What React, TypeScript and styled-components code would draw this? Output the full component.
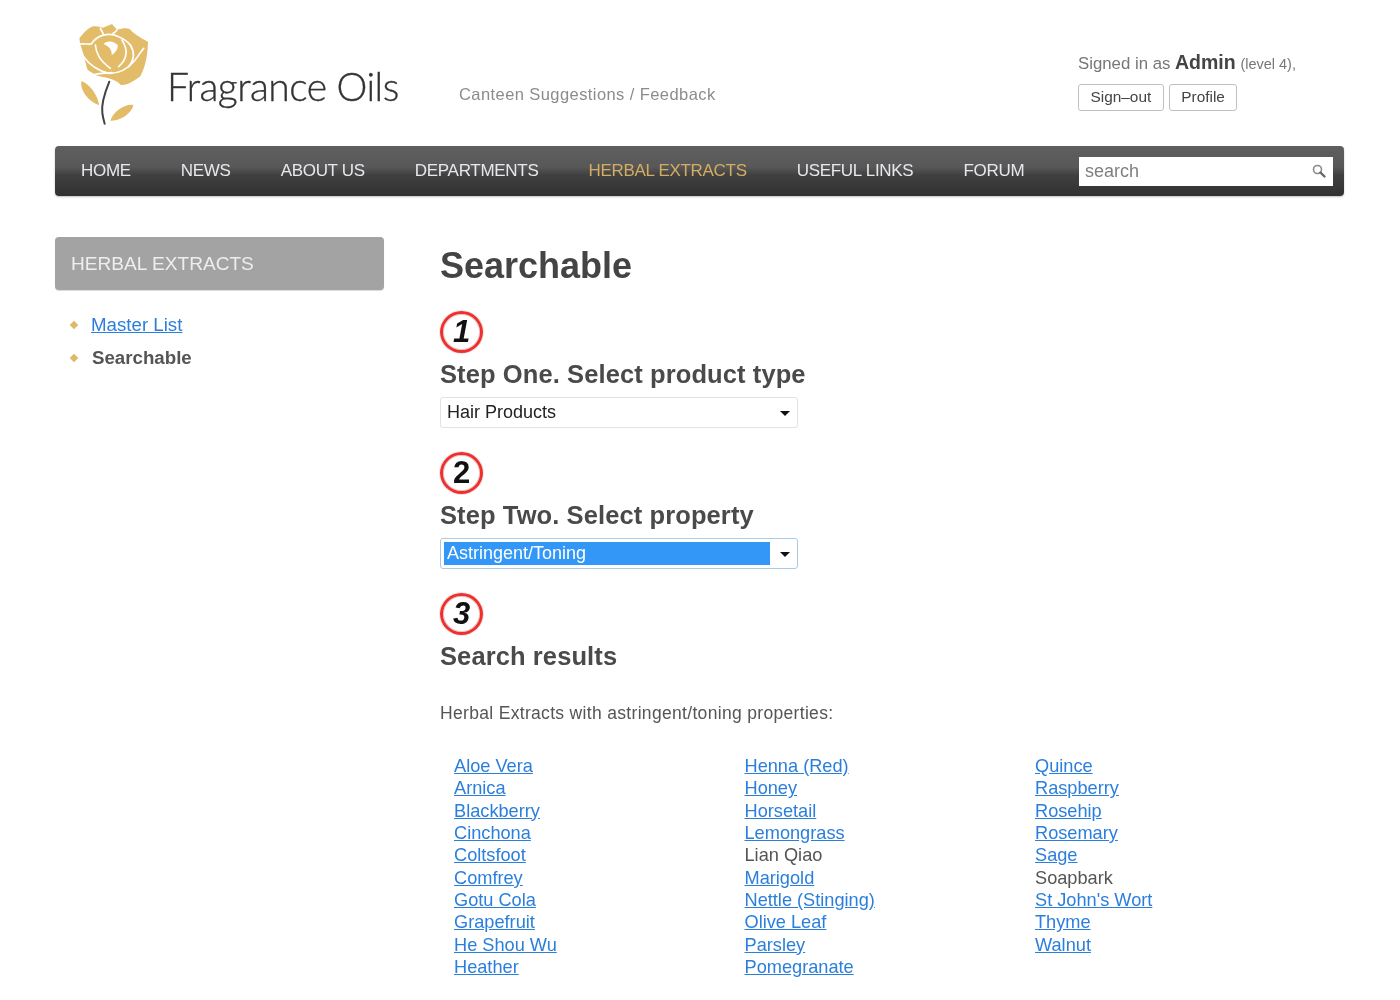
import React from 'react'
import styled, { createGlobalStyle } from 'styled-components'

const GlobalStyle = createGlobalStyle`
  html, body {
    margin: 0;
    padding: 0;
    background: #fff;
  }
  body {
    font-family: "Liberation Sans", Arial, sans-serif;
    color: #444;
  }
`

const Page = styled.div`
  width: 1400px;
  height: 1000px;
  overflow: hidden;
  box-sizing: border-box;
  padding: 0 56px 0 55px;
  filter: blur(0.35px);
`

const Header = styled.header`
  display: flex;
  height: 146px;
`

const LogoBox = styled.div`
  display: flex;
  align-items: flex-start;
  width: 404px;
  padding: 23px 0 0 22px;
  box-sizing: border-box;
`

const LogoText = styled.span`
  margin: 39px 0 0 13px;
  font-family: Lato, sans-serif;
  font-weight: 300;
  font-size: 39px;
  line-height: 48px;
  letter-spacing: -0.55px;
  color: #333;
  -webkit-text-stroke: 0.35px #333;
  white-space: nowrap;
`

const Tagline = styled.div`
  flex: 1;
  padding-top: 84px;
  font-size: 16.5px;
  line-height: 20px;
  letter-spacing: 0.42px;
  color: #8c8c8c;
`

const UserBox = styled.div`
  width: 266px;
  padding-top: 51px;
`

const SignedIn = styled.div`
  font-size: 16.8px;
  line-height: 22px;
  color: #777;
  white-space: nowrap;

  b {
    font-size: 19.5px;
    color: #444;
  }

  small {
    font-size: 14.5px;
  }
`

const UserButtons = styled.div`
  display: flex;
  gap: 5px;
  margin-top: 9px;
`

const UserButton = styled.span`
  box-sizing: border-box;
  height: 27px;
  padding: 0 11.5px;
  border: 1px solid #c0c0c0;
  border-radius: 3px;
  font-size: 15.4px;
  line-height: 24px;
  color: #444;
`

const Nav = styled.nav`
  display: flex;
  align-items: center;
  height: 50px;
  padding: 0 11px 0 26px;
  border-radius: 4px;
  background: linear-gradient(#5f5f5f, #585858 42%, #404040 58%, #313131);
  box-shadow: 0 1px 2px rgba(0, 0, 0, 0.25);
`

const NavItem = styled.span<{ $active?: boolean }>`
  margin-right: 50px;
  font-size: 17px;
  letter-spacing: -0.3px;
  color: ${(props) => (props.$active ? '#d4ad62' : '#e6e8ec')};
  white-space: nowrap;
`

const SearchBox = styled.div`
  display: flex;
  align-items: center;
  justify-content: space-between;
  box-sizing: border-box;
  width: 254px;
  height: 29px;
  margin-left: auto;
  padding: 0 7px 0 6px;
  background: #fff;
  font-size: 18px;
  color: #808080;
`

const Content = styled.div`
  display: flex;
  padding-top: 41px;
`

const Sidebar = styled.aside`
  flex: none;
  width: 329px;
  margin-right: 56px;
`

const SideTitle = styled.div`
  height: 53px;
  padding-left: 16px;
  border-radius: 4px;
  background: #a3a3a3;
  box-shadow: 0 1px 1px rgba(0, 0, 0, 0.15);
  font-size: 19.1px;
  line-height: 53px;
  color: #eee;
`

const SideList = styled.ul`
  margin: 18px 0 0;
  padding: 0 0 0 16px;
  list-style: none;
`

const SideItem = styled.li`
  display: flex;
  align-items: center;
  height: 33.5px;
  font-size: 18.7px;
`

const Diamond = styled.span`
  width: 6px;
  height: 6px;
  margin-right: 14px;
  background: #e0b766;
  transform: rotate(45deg);
`

const Current = styled.span`
  margin-left: 1px;
  font-weight: 700;
  color: #555;
`

const Link = styled.a`
  color: #2b7fdc;
  text-decoration: underline;
  cursor: pointer;
`

const Main = styled.main`
  flex: 1;
`

const Title = styled.h1`
  margin: 7px 0 23px;
  font-size: 36px;
  line-height: 44px;
  font-weight: 700;
  color: #444;
`

const Step = styled.section`
  height: 141px;
`

const Badge = styled.div<{ $upright?: boolean }>`
  display: flex;
  align-items: center;
  justify-content: center;
  box-sizing: border-box;
  width: 43px;
  height: 42px;
  border: 3px solid #f0302c;
  border-radius: 50%;
  font-size: 31px;
  font-weight: 700;
  font-style: ${(props) => (props.$upright ? 'normal' : 'italic')};
  color: #111;
  box-shadow: 0 0 0 1px rgba(90, 0, 0, 0.2) inset, 0 0 0 1px rgba(90, 0, 0, 0.1);
`

const StepTitle = styled.h2`
  margin: 0;
  padding-top: 5px;
  font-size: 25.5px;
  line-height: 32px;
  letter-spacing: 0.1px;
  font-weight: 700;
  color: #4a4a4a;
`

const Select = styled.div<{ $focused?: boolean }>`
  display: flex;
  align-items: center;
  box-sizing: border-box;
  width: 358px;
  height: 31px;
  margin-top: 7px;
  padding: 0 7px 0 3px;
  border: 1px solid ${(props) => (props.$focused ? '#a9cbe8' : '#dfe2ea')};
  border-radius: 3px;
  background: #fff;
  font-size: 18px;
  color: #222;
`

const SelectValue = styled.span<{ $selected?: boolean }>`
  flex: 1;
  height: 23px;
  margin-right: 10px;
  padding-left: 3px;
  line-height: 23px;
  color: ${(props) => (props.$selected ? '#fff' : '#222')};
  background: ${(props) => (props.$selected ? '#3397f7' : 'transparent')};
`

const Caret = styled.span`
  width: 0;
  height: 0;
  margin-top: 1px;
  border-left: 5px solid transparent;
  border-right: 5px solid transparent;
  border-top: 5px solid #111;
`

const Intro = styled.p`
  margin: -33px 0 0;
  font-size: 17.5px;
  line-height: 24px;
  letter-spacing: 0.32px;
  color: #555;
`

const Columns = styled.div`
  display: grid;
  grid-template-columns: repeat(3, 290.5px);
  margin-top: 30px;
  padding-left: 14px;
`

const Column = styled.ul`
  margin: 0;
  padding: 0;
  list-style: none;
`

const Herb = styled.li`
  height: 22.35px;
  font-size: 18.2px;
  line-height: 22.35px;
  color: #555;
`

const Rose = () => (
  <svg width="77" height="107" viewBox="0 0 231 321">
    <path
      fill="#e2bc68"
      d="M7 46 C20 30 35 12 50 10 C62 8 68 12 78 14 L105 3 C112 12 118 18 122 20 C135 15 150 14 158 18 C168 30 190 45 213 56 C212 90 208 125 190 160 C170 175 150 188 132 186 C120 172 100 165 60 158 L32 141 C25 120 22 100 20 95 C15 80 8 62 7 46 Z"
    />
    <g fill="none" stroke="#fff" strokeWidth="5" strokeLinecap="round">
      <path d="M10 63 C22 62 34 64 43 63 C60 36 95 26 125 41 C140 47 152 56 160 66" />
      <path d="M70 16 C74 24 78 30 80 36" />
      <path d="M120 21 C116 26 112 30 108 31" />
      <path d="M55 66 C58 90 65 110 100 136" />
      <path d="M135 51 C150 75 155 105 125 131" />
      <path d="M20 101 C35 122 60 142 95 151 C125 152 150 140 172 114 C185 98 192 85 200 76" />
      <path d="M160 66 C172 85 176 105 155 131" />
      <path d="M45 156 C70 150 90 150 105 149" />
    </g>
    <path fill="#fff" d="M80 63 C90 53 108 53 122 66 C124 78 114 90 104 96 C106 82 96 70 80 63 Z" />
    <path fill="#e2bc68" d="M13 175 C35 180 62 215 66 246 C40 240 8 205 13 175 Z" />
    <path fill="#e2bc68" d="M100 293 C108 265 145 242 169 246 C165 270 130 295 100 293 Z" />
    <path fill="none" stroke="#444" strokeWidth="6" strokeLinecap="round" d="M97 176 C85 205 72 240 76 270 C78 285 81 295 83 302" />
  </svg>
)

const SearchIcon = () => (
  <svg width="14" height="14" viewBox="0 0 14 14">
    <circle cx="5.5" cy="5.5" r="4" fill="none" stroke="#8a8a8a" strokeWidth="1.6" />
    <path d="M8.5 8.5 L12.5 12.5" stroke="#666" strokeWidth="2.4" strokeLinecap="round" />
  </svg>
)

const navItems = ['HOME', 'NEWS', 'ABOUT US', 'DEPARTMENTS', 'HERBAL EXTRACTS', 'USEFUL LINKS', 'FORUM']

const herbColumns: { name: string; plain?: boolean }[][] = [
  [
    { name: 'Aloe Vera' },
    { name: 'Arnica' },
    { name: 'Blackberry' },
    { name: 'Cinchona' },
    { name: 'Coltsfoot' },
    { name: 'Comfrey' },
    { name: 'Gotu Cola' },
    { name: 'Grapefruit' },
    { name: 'He Shou Wu' },
    { name: 'Heather' },
  ],
  [
    { name: 'Henna (Red)' },
    { name: 'Honey' },
    { name: 'Horsetail' },
    { name: 'Lemongrass' },
    { name: 'Lian Qiao', plain: true },
    { name: 'Marigold' },
    { name: 'Nettle (Stinging)' },
    { name: 'Olive Leaf' },
    { name: 'Parsley' },
    { name: 'Pomegranate' },
  ],
  [
    { name: 'Quince' },
    { name: 'Raspberry' },
    { name: 'Rosehip' },
    { name: 'Rosemary' },
    { name: 'Sage' },
    { name: 'Soapbark', plain: true },
    { name: "St John's Wort" },
    { name: 'Thyme' },
    { name: 'Walnut' },
  ],
]

const App: React.FunctionComponent<{}> = () => (
  <Page>
    <GlobalStyle />
    <Header>
      <LogoBox>
        <Rose />
        <LogoText>Fragrance Oils</LogoText>
      </LogoBox>
      <Tagline>Canteen Suggestions / Feedback</Tagline>
      <UserBox>
        <SignedIn>
          Signed in as <b>Admin</b> <small>(level 4),</small>
        </SignedIn>
        <UserButtons>
          <UserButton>Sign–out</UserButton>
          <UserButton>Profile</UserButton>
        </UserButtons>
      </UserBox>
    </Header>
    <Nav>
      {navItems.map((item) => (
        <NavItem key={item} $active={item === 'HERBAL EXTRACTS'}>
          {item}
        </NavItem>
      ))}
      <SearchBox>
        search
        <SearchIcon />
      </SearchBox>
    </Nav>
    <Content>
      <Sidebar>
        <SideTitle>HERBAL EXTRACTS</SideTitle>
        <SideList>
          <SideItem>
            <Diamond />
            <Link>Master List</Link>
          </SideItem>
          <SideItem>
            <Diamond />
            <Current>Searchable</Current>
          </SideItem>
        </SideList>
      </Sidebar>
      <Main>
        <Title>Searchable</Title>
        <Step>
          <Badge>1</Badge>
          <StepTitle>Step One. Select product type</StepTitle>
          <Select>
            <SelectValue>Hair Products</SelectValue>
            <Caret />
          </Select>
        </Step>
        <Step>
          <Badge $upright>2</Badge>
          <StepTitle>Step Two. Select property</StepTitle>
          <Select $focused>
            <SelectValue $selected>Astringent/Toning</SelectValue>
            <Caret />
          </Select>
        </Step>
        <Step>
          <Badge>3</Badge>
          <StepTitle>Search results</StepTitle>
        </Step>
        <Intro>Herbal Extracts with astringent/toning properties:</Intro>
        <Columns>
          {herbColumns.map((column, index) => (
            <Column key={index}>
              {column.map((herb) => (
                <Herb key={herb.name}>{herb.plain ? herb.name : <Link>{herb.name}</Link>}</Herb>
              ))}
            </Column>
          ))}
        </Columns>
      </Main>
    </Content>
  </Page>
)

export default App
